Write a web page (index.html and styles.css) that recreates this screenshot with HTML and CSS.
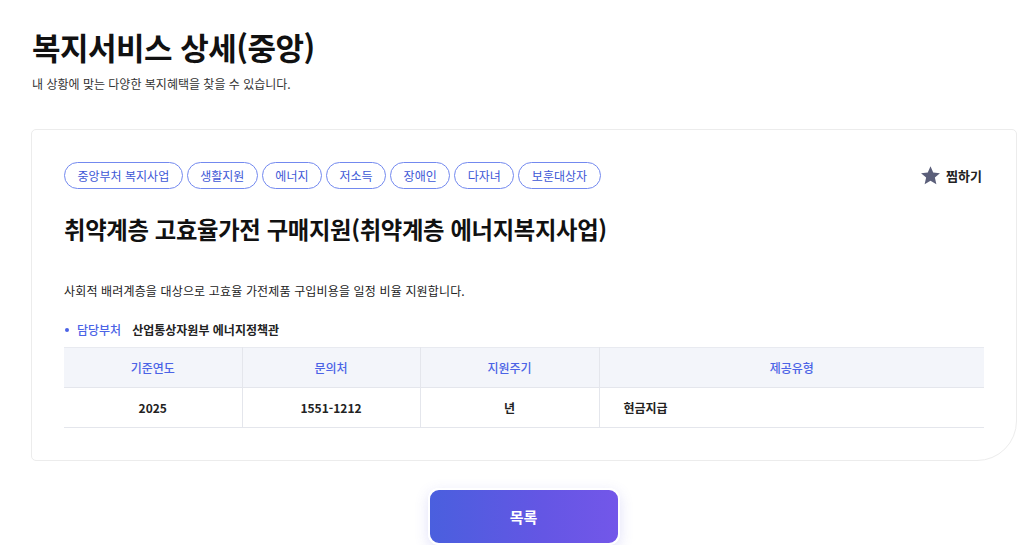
FILE: index.html
```html
<!DOCTYPE html>
<html lang="ko">
<head>
<meta charset="utf-8">
<link rel="stylesheet" href="styles.css">
</head>
<body>
<div class="page">
  <header class="page-head">
    <h1 class="page-title">복지서비스 상세(중앙)</h1>
    <p class="page-sub">내 상황에 맞는 다양한 복지혜택을 찾을 수 있습니다.</p>
  </header>

  <section class="card">
    <div class="card-top">
      <ul class="tags">
        <li class="tag">중앙부처 복지사업</li>
        <li class="tag">생활지원</li>
        <li class="tag">에너지</li>
        <li class="tag">저소득</li>
        <li class="tag">장애인</li>
        <li class="tag">다자녀</li>
        <li class="tag">보훈대상자</li>
      </ul>
      <button class="fav">
        <svg class="star" viewBox="0 0 24 24" width="21" height="21"><path d="M12 1.5l3.1 7.1 7.7.7-5.8 5.1 1.7 7.6L12 18l-6.7 4 1.7-7.6L1.2 9.3l7.7-.7z" fill="#5b5f7a"/></svg>
        <span>찜하기</span>
      </button>
    </div>
    <h2 class="svc-title">취약계층 고효율가전 구매지원(취약계층 에너지복지사업)</h2>
    <p class="svc-desc">사회적 배려계층을 대상으로 고효율 가전제품 구입비용을 일정 비율 지원합니다.</p>
    <div class="dept">
      <span class="dept-label">담당부처</span>
      <span class="dept-value">산업통상자원부 에너지정책관</span>
    </div>
    <table class="info">
      <colgroup>
        <col class="c1"><col class="c2"><col class="c3"><col class="c4">
      </colgroup>
      <thead>
        <tr><th>기준연도</th><th>문의처</th><th>지원주기</th><th>제공유형</th></tr>
      </thead>
      <tbody>
        <tr><td>2025</td><td>1551-1212</td><td>년</td><td class="left">현금지급</td></tr>
      </tbody>
    </table>
  </section>

  <div class="actions">
    <button class="btn-list">목록</button>
  </div>
</div>
</body>
</html>
```

FILE: styles.css
```css
* { box-sizing: border-box; }
html, body { margin: 0; padding: 0; background: #fff; }
body {
  font-family: "Noto Sans CJK KR", "Noto Sans", sans-serif;
  color: #111;
}
.page {
  padding: 27px 7px 0 31px;
}
.page-head { margin-left: 1px; }
.page-title {
  margin: 0;
  font-size: 31px;
  font-weight: 700;
  line-height: 40px;
  letter-spacing: -0.5px;
  color: #111;
}
.page-sub {
  margin: 9px 0 0;
  font-size: 12px;
  line-height: 16px;
  color: #333;
}
.card {
  margin-top: 37px;
  border: 1px solid #ececec;
  border-radius: 5px 5px 40px 5px;
  padding: 32px 32px 32px 32px;
  background: #fff;
}
.card-top {
  display: flex;
  justify-content: space-between;
  align-items: center;
}
.tags {
  list-style: none;
  margin: 0;
  padding: 0;
  display: flex;
  gap: 4px;
}
.tag {
  height: 27px;
  padding: 0 12.5px;
  border: 1px solid #7389ef;
  border-radius: 14px;
  font-size: 12px;
  line-height: 25px;
  color: #3d57d6;
}
.fav {
  display: flex;
  align-items: center;
  gap: 5px;
  background: none;
  border: 0;
  padding: 0;
  margin-right: 2px;
  font-family: inherit;
  font-size: 13px;
  font-weight: 700;
  color: #222;
}
.star { display: block; }
.svc-title {
  margin: 23px 0 0;
  font-size: 23.3px;
  font-weight: 700;
  line-height: 34px;
  letter-spacing: -0.3px;
  color: #111;
}
.svc-desc {
  margin: 35px 0 0;
  font-size: 12px;
  line-height: 20px;
  letter-spacing: 0.15px;
  color: #222;
}
.dept {
  margin-top: 19px;
  display: flex;
  align-items: center;
  gap: 11px;
  font-size: 12px;
  line-height: 20px;
}
.dept-label {
  position: relative;
  padding-left: 13px;
  color: #4b63e6;
  font-weight: 500;
}
.dept-label::before {
  content: "";
  position: absolute;
  left: 1px;
  top: 8px;
  width: 4px;
  height: 4px;
  border-radius: 50%;
  background: #4b63e6;
}
.dept-value { font-weight: 700; color: #222; }
.info {
  margin-top: 7px;
  width: 100%;
  border-collapse: collapse;
  font-size: 12px;
  table-layout: fixed;
}
.c1, .c2 { width: 178px; }
.c3 { width: 179px; }
.info th, .info td {
  border-left: 1px solid #e4e6ec;
  text-align: center;
}
.info th:first-child, .info td:first-child { border-left: 0; }
.info thead tr { background: #f3f5fa; border-top: 1px solid #e8eaf0; border-bottom: 1px solid #e4e6ec; }
.info th {
  height: 40px;
  font-weight: 500;
  color: #4b63e6;
}
.info td {
  height: 40px;
  font-weight: 700;
  color: #222;
  border-bottom: 1px solid #e4e6ec;
}
.info td.left { text-align: left; padding-left: 24px; }
.actions {
  display: flex;
  justify-content: center;
  margin-top: 27px;
  padding-right: 1px;
}
.btn-list {
  width: 192px;
  height: 57px;
  border: 2px solid #fff;
  border-radius: 11px;
  background: linear-gradient(90deg, #4a5fde 0%, #6456e4 60%, #7357e9 100%);
  box-shadow: 0 4px 14px rgba(90, 90, 220, 0.18);
  color: #fff;
  font-family: inherit;
  font-size: 15px;
  font-weight: 700;
}
```
